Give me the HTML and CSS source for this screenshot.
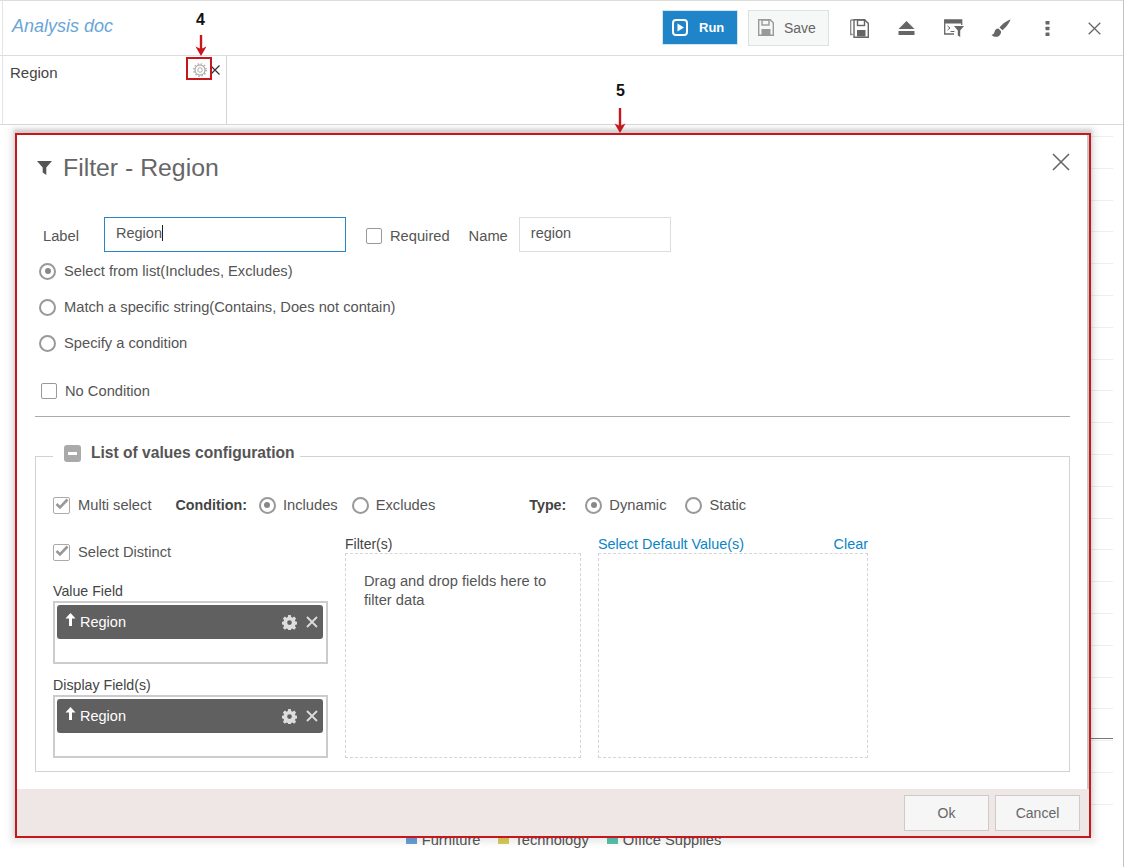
FILE: index.html
```html
<!DOCTYPE html>
<html lang="en">
<head>
    <meta charset="UTF-8">
    <title>Analysis doc</title>
    <link rel="stylesheet" href="styles.css">
</head>
<body>
<div class="page">
    <header class="toolbar">
        <div class="doc-title">Analysis doc</div>
        <button class="btn-run">
            <svg width="16" height="17" viewBox="0 0 16 17"><rect x="1" y="1" width="14" height="15" rx="3" fill="none" stroke="#fff" stroke-width="2"/><path d="M5.500 4.500l6.500 4-6.500 4z" fill="#fff"/></svg>
            Run
        </button>
        <button class="btn-save">
            <svg width="16" height="17" viewBox="0 0 16 17"><path d="M.7.7h11.500l3.100 3.100v12.500H.7z" fill="none" stroke="#999" stroke-width="1.400"/><rect x="4" y="1" width="7" height="5" fill="none" stroke="#999" stroke-width="1.400"/><rect x="3.500" y="10" width="9" height="6" fill="#999"/></svg>
            Save
        </button>
        <div class="tool-icons">
            <span class="tool"><svg width="19" height="19" viewBox="0 0 19 19"><path d="M.7 1h3M.7 1v14.500h2" fill="none" stroke="#888" stroke-width="1.300"/><path d="M4 .8h10.500l3.800 3.600v13.800H4z" fill="#fff" stroke="#666" stroke-width="1.400"/><rect x="7.500" y="1" width="7" height="5.500" fill="none" stroke="#666" stroke-width="1.400"/><rect x="7" y="11" width="8.500" height="6.500" fill="#666"/></svg></span>
            <span class="tool"><svg width="17" height="14" viewBox="0 0 17 14"><path d="M8.500 0l8 8H.5z" fill="#666"/><rect x=".5" y="10" width="16" height="4" fill="#666"/></svg></span>
            <span class="tool"><svg width="20" height="18" viewBox="0 0 20 18"><path d="M10 15H.7V1h17v5" fill="none" stroke="#666" stroke-width="1.300"/><rect x="1" y="1" width="16.500" height="3.500" fill="#666"/><path d="M3.500 7l2.500 2-2.500 2M6.500 12.500h4" fill="none" stroke="#666" stroke-width="1"/><path d="M10 7h10l-3.800 4.500V18l-2.400-1.500v-5z" fill="#666"/></svg></span>
            <span class="tool"><svg width="20" height="19" viewBox="0 0 20 19"><path d="M19.500.5c-2.500.5-8 4-11 8l3 2.800c3.500-3 7-7.500 8-10.800z" fill="#666"/><path d="M7.500 9.500c-2.500 0-3.500 1.500-4 3.500-.3 1.500-1.500 2.500-3 3 2 2 5.500 2.500 7.500 1 1.800-1.400 2.200-3.300 2-4.700z" fill="#666"/></svg></span>
            <span class="tool"><svg width="5" height="15" viewBox="0 0 5 15"><rect x=".5" width="4" height="3.500" rx=".6" fill="#666"/><rect x=".5" y="5.700" width="4" height="3.500" rx=".6" fill="#666"/><rect x=".5" y="11.500" width="4" height="3.500" rx=".6" fill="#666"/></svg></span>
            <span class="tool"><svg width="13" height="13" viewBox="0 0 13 13"><path d="M.7.700l11.600 11.600M12.300.700L.7 12.300" stroke="#666" stroke-width="1.300"/></svg></span>
        </div>
    </header>

    <section class="filter-strip">
        <div class="filter-card">
            <span class="filter-name">Region</span>
            <svg class="card-gear" width="14" height="14" viewBox="0 0 14 14"><circle cx="7" cy="7" r="2.300" fill="none" stroke="#999" stroke-width=".8"/><circle cx="7" cy="7" r="5" fill="none" stroke="#999" stroke-width="1"/><circle cx="7" cy="7" r="6.200" fill="none" stroke="#aaa" stroke-width="1.400" stroke-dasharray="1.500 1.750"/></svg>
            <svg class="card-close" width="10" height="10" viewBox="0 0 10 10"><path d="M.5.500l9 9M9.500.500l-9 9" stroke="#333" stroke-width="1.200"/></svg>
        </div>
    </section>

    <main class="chart">
        <div class="chart-grid"><div class="chart-tick"></div></div>
        <div class="chart-legend">
            <span class="legend-item"><i class="swatch swatch-blue"></i>Furniture</span>
            <span class="legend-item"><i class="swatch swatch-yellow"></i>Technology</span>
            <span class="legend-item"><i class="swatch swatch-teal"></i>Office Supplies</span>
        </div>
    </main>
</div>

<!-- Dialog -->
<div class="dialog">
    <div class="dialog-body">
        <div class="dialog-head">
            <svg width="15" height="14" viewBox="0 0 15 14"><path d="M0 0h15L9.300 6.500V14L5.700 11.500v-5z" fill="#555"/></svg>
            <h2>Filter - Region</h2>
            <svg class="dialog-close" width="18" height="18" viewBox="0 0 18 18"><path d="M1 1l16 16M17 1L1 17" stroke="#666" stroke-width="1.600"/></svg>
        </div>

        <div class="label-row">
            <label class="field-label">Label</label>
            <div class="text-input text-input-active">Region<span class="caret"></span></div>
            <span class="check check-required"><i class="box"></i>Required</span>
            <label class="name-label">Name</label>
            <div class="text-input text-input-name">region</div>
        </div>

        <div class="radio-list">
            <div class="radio-line"><i class="radio on"></i>Select from list(Includes, Excludes)</div>
            <div class="radio-line"><i class="radio"></i>Match a specific string(Contains, Does not contain)</div>
            <div class="radio-line"><i class="radio"></i>Specify a condition</div>
        </div>

        <div class="check check-none"><i class="box"></i>No Condition</div>
        <hr class="divider">

        <fieldset class="config">
            <legend>
                <span class="collapse-btn"></span>
                List of values configuration
            </legend>

            <div class="options-row">
                <span class="check"><i class="box box-checked"><svg width="16" height="16" viewBox="0 0 16 16"><path d="M3.500 7l3.500 3.500L14.500 2.500" fill="none" stroke="#999" stroke-width="2.600"/></svg></i>Multi select</span>
                <b class="opt-title opt-condition">Condition:</b>
                <span class="radio-opt"><i class="radio on"></i>Includes</span>
                <span class="radio-opt"><i class="radio"></i>Excludes</span>
                <b class="opt-title opt-type">Type:</b>
                <span class="radio-opt"><i class="radio on"></i>Dynamic</span>
                <span class="radio-opt"><i class="radio"></i>Static</span>
            </div>

            <div class="columns">
                <div class="col-fields">
                    <div class="check check-distinct"><i class="box box-checked"><svg width="16" height="16" viewBox="0 0 16 16"><path d="M3.500 7l3.500 3.500L14.500 2.500" fill="none" stroke="#999" stroke-width="2.600"/></svg></i>Select Distinct</div>

                    <div class="field-title">Value Field</div>
                    <div class="field-box">
                        <div class="chip">
                            <svg class="chip-arrow" width="11" height="13" viewBox="0 0 11 13"><path d="M5.500 0l5 5.500H7V13H4V5.500H.5z" fill="#fff"/></svg>
                            <span class="chip-text">Region</span>
                            <svg class="chip-gear" width="15" height="15" viewBox="0 0 16 16"><path d="M6.600 0h2.800l.4 2.200 1.300.6 1.900-1.200 2 2-1.200 1.900.6 1.300 2.100.4v2.800l-2.100.4-.6 1.300 1.200 1.900-2 2-1.900-1.200-1.300.6-.4 2.100H6.600l-.4-2.100-1.300-.6L3 15.600l-2-2 1.200-1.900-.6-1.300L-.5 10V7.200l2.100-.4.600-1.300L1 3.600l2-2 1.900 1.200 1.300-.6zM8 5.600a2.500 2.500 0 1 0 0 5 2.500 2.500 0 0 0 0-5z" fill="#ddd" fill-rule="evenodd"/></svg>
                            <svg class="chip-close" width="12" height="12" viewBox="0 0 12 12"><path d="M1 1l10 10M11 1L1 11" stroke="#ddd" stroke-width="1.800"/></svg>
                        </div>
                    </div>

                    <div class="field-title field-title-display">Display Field(s)</div>
                    <div class="field-box">
                        <div class="chip">
                            <svg class="chip-arrow" width="11" height="13" viewBox="0 0 11 13"><path d="M5.500 0l5 5.500H7V13H4V5.500H.5z" fill="#fff"/></svg>
                            <span class="chip-text">Region</span>
                            <svg class="chip-gear" width="15" height="15" viewBox="0 0 16 16"><path d="M6.600 0h2.800l.4 2.200 1.300.6 1.900-1.200 2 2-1.200 1.900.6 1.300 2.100.4v2.800l-2.100.4-.6 1.300 1.200 1.900-2 2-1.900-1.200-1.300.6-.4 2.100H6.600l-.4-2.100-1.300-.6L3 15.600l-2-2 1.200-1.900-.6-1.300L-.5 10V7.200l2.100-.4.600-1.300L1 3.600l2-2 1.900 1.200 1.300-.6zM8 5.600a2.500 2.500 0 1 0 0 5 2.500 2.500 0 0 0 0-5z" fill="#ddd" fill-rule="evenodd"/></svg>
                            <svg class="chip-close" width="12" height="12" viewBox="0 0 12 12"><path d="M1 1l10 10M11 1L1 11" stroke="#ddd" stroke-width="1.800"/></svg>
                        </div>
                    </div>
                </div>

                <div class="col-filters">
                    <div class="col-head">Filter(s)</div>
                    <div class="drop-zone">Drag and drop fields here to filter data</div>
                </div>

                <div class="col-defaults">
                    <div class="col-head col-head-links"><a>Select Default Value(s)</a><a>Clear</a></div>
                    <div class="drop-zone"></div>
                </div>
            </div>
        </fieldset>
    </div>

    <footer class="dialog-foot">
        <button class="btn-foot">Ok</button>
        <button class="btn-foot">Cancel</button>
    </footer>
</div>

<!-- Annotations drawn over the screenshot -->
<div class="note note-4">4</div>
<svg class="arrow arrow-4" width="12" height="21" viewBox="0 0 12 21"><path d="M6 0v14" stroke="#c8161d" stroke-width="2.400"/><path d="M.5 11.500L6 21l5.500-9.500L6 14z" fill="#c8161d"/></svg>
<div class="mark-gear"></div>
<div class="note note-5">5</div>
<svg class="arrow arrow-5" width="12" height="25" viewBox="0 0 12 25"><path d="M6 0v18" stroke="#c8161d" stroke-width="2.400"/><path d="M.5 15.500L6 25l5.500-9.500L6 18z" fill="#c8161d"/></svg>
</body>
</html>
```

FILE: styles.css
```css
* {
    box-sizing: border-box;
}
body {
    margin: 0;
    font-family: "Liberation Sans", Arial, sans-serif;
    font-size: 14.700px;
    color: #555;
    background-color: #fff;
    height: 867px;
    overflow: hidden;
    position: relative;
}
.page {
    height: 867px;
    display: flex;
    flex-direction: column;
    border-right: 1px solid #c4c4c4;
}
.toolbar {
    position: relative;
    height: 56px;
    flex: none;
    display: flex;
    align-items: center;
    border-top: 1px solid #dcdcd8;
    border-bottom: 1px solid #dcdcd8;
    padding: 0 5px 0 12px;
}
.toolbar::before {
    content: "";
    position: absolute;
    left: 2px;
    top: 0;
    bottom: 0;
    width: 1px;
    background-color: #e4e4e4;
}
.doc-title {
    font-size: 18px;
    font-style: italic;
    color: #69a5d8;
    flex: 1;
    margin-top: -4px;
}
.btn-run,
.btn-save {
    font-family: inherit;
    display: flex;
    align-items: center;
    padding: 0;
}
.btn-run {
    width: 76px;
    height: 35px;
    margin-top: -1px;
    padding-left: 9px;
    gap: 11px;
    font-size: 13px;
    background-color: #1f84c8;
    border: 1px solid #d4e6f0;
    color: #fff;
    font-weight: bold;
}
.btn-save {
    width: 81px;
    height: 36px;
    margin: -1px 0 0 10px;
    padding-left: 9px;
    gap: 10px;
    font-size: 14px;
    background-color: #f6f7f7;
    border: 1px solid #d9e3e1;
    color: #666;
}
.tool-icons {
    display: flex;
    margin-left: 7px;
}
.tool {
    width: 47px;
    height: 34px;
    display: flex;
    align-items: center;
    justify-content: center;
}

.filter-strip {
    height: 69px;
    flex: none;
    border-bottom: 1px solid #d8d8d8;
    padding-left: 2px;
}
.filter-card {
    position: relative;
    width: 225px;
    height: 68px;
    border-left: 1px solid #e4e4e4;
    border-right: 1px solid #d6d6d0;
    padding: 8px 7px;
}
.filter-name {
    font-size: 15px;
    color: #444;
}
.card-gear {
    position: absolute;
    left: 190px;
    top: 7px;
}
.card-close {
    position: absolute;
    left: 207px;
    top: 9px;
}

.chart {
    flex: 1;
    display: flex;
    flex-direction: column;
    width: 1113px;
}
.chart-grid {
    position: relative;
    flex: 1;
    margin: 11px 0 0 60px;
    background-image: repeating-linear-gradient(to bottom, #eee 0, #eee 1px, transparent 1px, transparent 31.800px);
}
.chart-tick {
    position: absolute;
    right: 0;
    top: 602px;
    width: 26px;
    height: 1px;
    background-color: #777;
}
.chart-legend {
    height: 35px;
    display: flex;
    justify-content: center;
    gap: 18px;
    padding-left: 14px;
    color: #555;
}
.legend-item {
    display: flex;
    align-items: flex-start;
    gap: 5px;
}
.swatch {
    width: 11px;
    height: 9px;
    margin-top: 3px;
}
.swatch-blue {
    background-color: #6a9fd8;
}
.swatch-yellow {
    background-color: #d8cc5a;
}
.swatch-teal {
    background-color: #57c4ae;
}

.dialog {
    position: absolute;
    left: 15px;
    top: 133px;
    width: 1076px;
    height: 705px;
    display: flex;
    flex-direction: column;
    background-color: #fff;
    border: 2px solid #c8161d;
    box-shadow: inset -2px 0 0 #c8c8c8, 0 -3px 3px 1px rgba(0, 0, 0, 0.12), 0 0 6px 5px rgba(0, 0, 0, 0.08);
}
.dialog-body {
    flex: 1;
    padding: 0 19px 0 18px;
}
.dialog-foot {
    height: 47px;
    flex: none;
    display: flex;
    justify-content: flex-end;
    gap: 6px;
    padding: 6px 9px 5px;
    background-color: #efe6e6;
}
.btn-foot {
    width: 85px;
    height: 36px;
    background-color: #f6f6f6;
    border: 1px solid #cfcaca;
    color: #666;
    font-family: inherit;
    font-size: 14px;
}

.dialog-head {
    height: 82px;
    display: flex;
    align-items: center;
    gap: 11px;
    padding: 0 0 17px 2px;
}
.dialog-head h2 {
    margin: 0;
    font-size: 24.800px;
    font-weight: normal;
    color: #666;
    flex: 1;
}
.dialog-close {
    margin-top: -11px;
}

.label-row {
    display: flex;
    align-items: center;
    height: 35px;
}
.field-label {
    width: 69px;
    padding-left: 8px;
    margin-top: 2px;
}
.name-label {
    margin: 2px 11px 0 19px;
}
.text-input {
    height: 35px;
    border: 1px solid #ddd;
    padding: 7px 11px;
    color: #555;
    font-size: 14.500px;
}
.text-input-active {
    width: 242px;
    border-color: #2a85c8;
    margin-right: 20px;
}
.text-input-name {
    width: 152px;
}
.caret {
    display: inline-block;
    width: 1px;
    height: 16px;
    background-color: #222;
    vertical-align: -3px;
}

.check {
    display: inline-flex;
    align-items: center;
    gap: 8px;
}
.check-required {
    margin-top: 2px;
}
.box {
    display: block;
    position: relative;
    width: 16px;
    height: 16px;
    border: 1.500px solid #999;
    border-radius: 2px;
    flex: none;
}
.box-checked {
    width: 17px;
    height: 17px;
    border-color: #aaa;
}
.box svg {
    position: absolute;
    left: -1px;
    top: -1px;
}
.radio {
    display: block;
    position: relative;
    width: 17px;
    height: 17px;
    border: 2px solid #999;
    border-radius: 50%;
    flex: none;
}
.radio.on::after {
    content: "";
    position: absolute;
    left: 3.500px;
    top: 3.500px;
    width: 6px;
    height: 6px;
    border-radius: 50%;
    background-color: #888;
}
.radio-list {
    padding: 1px 0 0 4px;
}
.radio-line {
    height: 36px;
    display: flex;
    align-items: center;
    gap: 8px;
}
.check-none {
    display: flex;
    margin: 18px 0 0 6px;
    height: 24px;
}
.divider {
    border: none;
    border-top: 1px solid #aaa;
    margin: 13px 0 0;
}
.config {
    margin: 24px 0 0;
    padding: 0 17px;
    height: 331px;
    border: 1px solid #d2d2cf;
}
.config legend {
    padding: 1px 5px 7px 11px;
    font-size: 15.600px;
    font-weight: bold;
    color: #555;
    line-height: 22px;
    display: flex;
    align-items: center;
    gap: 10px;
}
.collapse-btn {
    display: block;
    position: relative;
    width: 17px;
    height: 17px;
    border-radius: 3px;
    background-color: #aaa;
}
.collapse-btn::after {
    content: "";
    position: absolute;
    left: 4px;
    top: 7px;
    width: 9px;
    height: 3px;
    background-color: #fff;
}
.options-row {
    display: flex;
    align-items: center;
    height: 24px;
    margin-top: 22px;
}
.opt-title {
    color: #444;
    font-size: 14.300px;
}
.opt-condition {
    margin: 0 12px 0 24px;
}
.opt-type {
    margin: 0 19px 0 80px;
}
.radio-opt {
    display: flex;
    align-items: center;
    gap: 7px;
    margin-right: 14px;
}
.opt-type ~ .radio-opt {
    margin-right: 19px;
}
.columns {
    display: flex;
    margin-top: 18px;
}
.col-fields {
    width: 275px;
    margin-right: 17px;
}
.check-distinct {
    display: flex;
    margin-top: 5px;
    height: 24px;
}
.field-title {
    margin: 19px 0 2px;
    line-height: 16px;
    font-size: 14.200px;
    color: #444;
}
.field-title-display {
    margin-top: 13px;
}
.field-box {
    height: 63px;
    border: 2px solid #ccc;
    padding: 2px 3px 2px 2px;
}
.chip {
    height: 34px;
    background-color: #606060;
    border-radius: 3px;
    display: flex;
    align-items: center;
    padding: 0 5px 0 8px;
    color: #fff;
}
.chip-arrow {
    margin: -6px 4px 0 0;
}
.chip-text {
    flex: 1;
    font-size: 14.500px;
}
.chip-gear {
    margin-right: 9px;
}
.col-filters {
    width: 236px;
    margin-right: 17px;
}
.col-defaults {
    width: 270px;
}
.col-head {
    height: 18px;
    line-height: 18px;
    font-size: 14px;
    color: #444;
}
.col-head-links {
    display: flex;
    justify-content: space-between;
    font-size: 14.400px;
    color: #0a84c8;
}
.drop-zone {
    height: 205px;
    border: 1px dashed #d5d5d5;
    padding: 18px 18px;
    line-height: 19px;
}

.note {
    position: absolute;
    font-size: 16px;
    font-weight: bold;
    color: #111;
}
.note-4 {
    left: 196px;
    top: 11px;
}
.note-5 {
    left: 616px;
    top: 82px;
}
.arrow {
    position: absolute;
}
.arrow-4 {
    left: 195px;
    top: 35px;
}
.arrow-5 {
    left: 614px;
    top: 108px;
}
.mark-gear {
    position: absolute;
    left: 186px;
    top: 57px;
    width: 26px;
    height: 23px;
    border: 2px solid #c8161d;
}
```
